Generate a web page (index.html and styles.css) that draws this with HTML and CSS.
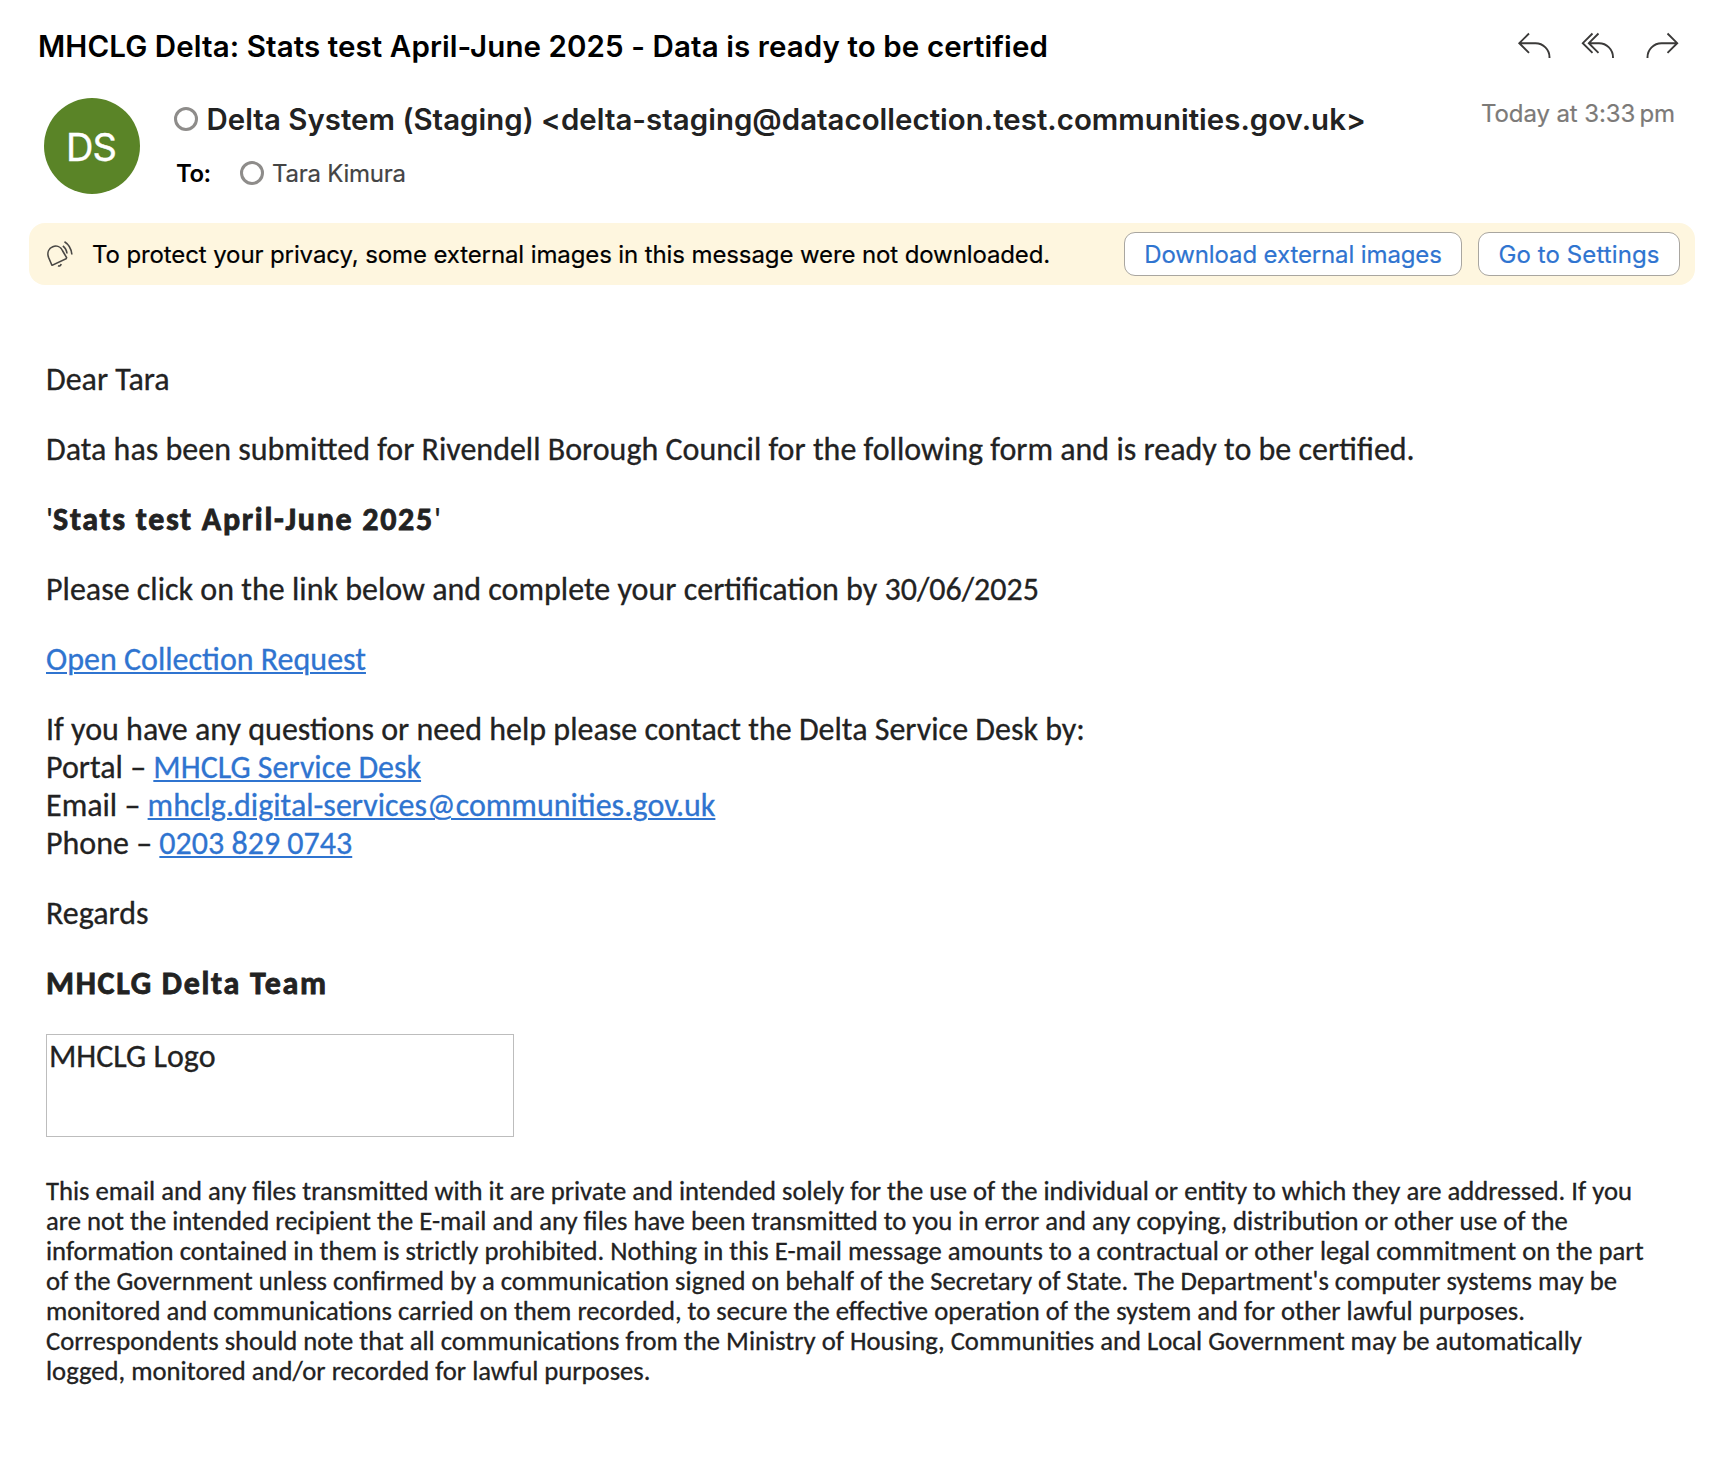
FILE: index.html
```html
<!DOCTYPE html>
<html lang="en">
<head>
<meta charset="utf-8">
<title>MHCLG Delta: Stats test April-June 2025 - Data is ready to be certified</title>
<link rel="stylesheet" href="styles.css">
</head>
<body>
<header class="subject-bar">
  <h1 class="subject">MHCLG Delta: Stats test April-June 2025 - Data is ready to be certified</h1>
  <nav class="actions">
    <svg class="action" viewBox="0 0 34 28" aria-label="Reply"><path d="M12 1.500 2.300 11.200 12 20.900M2.300 11.200H18.500A14 14 0 0 1 32.500 25.200V26"/></svg>
    <svg class="action" viewBox="0 0 34 28" aria-label="Reply all"><path d="M11.500 1.500 1.800 11.200 11.500 20.900M17.500 1.500 7.800 11.200 17.500 20.900M7.800 11.200H18A14 14 0 0 1 32 25.200V26"/></svg>
    <svg class="action" viewBox="0 0 34 28" aria-label="Forward"><path d="M22.500 1.500 32.200 11.200 22.500 20.900M32.200 11.200H16.500A14 14 0 0 0 2.500 25.200V26"/></svg>
  </nav>
</header>
<section class="envelope">
  <div class="avatar">DS</div>
  <div class="people">
    <div class="sender"><span class="presence"></span><span class="sender-name">Delta System (Staging) &lt;delta-staging@datacollection.test.communities.gov.uk&gt;</span></div>
    <div class="recipients"><span class="to">To:</span><span class="presence"></span><span class="recipient">Tara Kimura</span></div>
  </div>
  <time class="date">Today at 3:33&#8201;pm</time>
</section>
<aside class="banner">
  <svg class="bell" viewBox="0 0 28 28"><path d="M5.800 25 2.500 17.200C.9 12.400 2.800 8.300 6.800 6.700 10.800 5.200 14.800 7 16.700 11L20.600 17.600 20.200 18.700 6.400 25.200ZM12 25.800C13.500 26.400 14.800 25.600 15.200 24M16.800 6C19 7.500 20.500 10 21 13.500M18.500 1.800C22.600 4.300 25.300 9 25.900 14.500"/></svg>
  <p class="banner-text">To protect your privacy, some external images in this message were not downloaded.</p>
  <button class="button button-download">Download external images</button>
  <button class="button button-settings">Go to Settings</button>
</aside>
<main class="message">
  <p>Dear Tara</p>
  <p>Data has been submitted for Rivendell Borough Council for the following form and is ready to be certified.</p>
  <p>'<b>Stats test April-June 2025</b>'</p>
  <p>Please click on the link below and complete your certification by 30/06/2025</p>
  <p><a href="#">Open Collection Request</a></p>
  <p>If you have any questions or need help please contact the Delta Service Desk by:<br>
  Portal – <a href="#">MHCLG Service Desk</a><br>
  Email – <a href="#">mhclg.digital-services@communities.gov.uk</a><br>
  Phone – <a href="#">0203 829 0743</a></p>
  <p>Regards</p>
  <p><b>MHCLG Delta Team</b></p>
  <div class="logo">MHCLG Logo</div>
  <p class="disclaimer">This email and any files transmitted with it are private and intended solely for the use of the individual or entity to which they are addressed. If you are not the intended recipient the E-mail and any files have been transmitted to you in error and any copying, distribution or other use of the information contained in them is strictly prohibited. Nothing in this E-mail message amounts to a contractual or other legal commitment on the part of the Government unless confirmed by a communication signed on behalf of the Secretary of State. The Department's computer systems may be monitored and communications carried on them recorded, to secure the effective operation of the system and for other lawful purposes. Correspondents should note that all communications from the Ministry of Housing, Communities and Local Government may be automatically logged, monitored and/or recorded for lawful purposes.</p>
</main>
</body>
</html>
```
FILE: styles.css
```css
* { box-sizing: border-box; }

body {
  margin: 0;
  background: #fff;
  color: #222;
  font-family: Inter, "Liberation Sans", sans-serif;
}

p, h1 { margin: 0; }

.subject-bar {
  display: flex;
  justify-content: space-between;
  height: 98px;
  padding: 28px 37px 0 38px;
}

.subject {
  color: #000;
  font-size: 29.5px;
  font-weight: 600;
  line-height: 36px;
  letter-spacing: 0.09px;
}

.actions {
  display: flex;
  gap: 30px;
  padding-top: 3.5px;
}

.action {
  width: 34px;
  height: 28px;
  fill: none;
  stroke: #3b3a39;
  stroke-width: 1.9;
}

.envelope {
  display: flex;
  height: 125px;
  padding: 0 41px 0 44px;
}

.avatar {
  width: 96px;
  height: 96px;
  border-radius: 50%;
  background: #5a8427;
  color: #fff;
  font-size: 38px;
  line-height: 98px;
  letter-spacing: -1px;
  text-align: center;
  text-indent: -2px;
  -webkit-text-stroke: 0.4px;
}

.people { margin-left: 34px; }

.sender, .recipients {
  display: flex;
  align-items: center;
}

.sender {
  height: 42px;
  font-size: 29.4px;
  font-weight: 600;
  letter-spacing: 0.04px;
}

.recipients {
  height: 30px;
  margin-top: 18px;
  font-size: 24px;
  letter-spacing: -0.25px;
}

.presence {
  flex: none;
  width: 24px;
  height: 24px;
  border: 3px solid #8e8c8a;
  border-radius: 50%;
}

.sender-name { margin-left: 8.5px; white-space: nowrap; }
.to { width: 62px; padding-left: 2px; margin-right: 4px; color: #000; font-weight: 600; letter-spacing: -0.5px; }
.recipient { margin-left: 8px; color: #444; -webkit-text-stroke: 0.2px; }

.date {
  margin-left: auto;
  color: #7c7a78;
  font-size: 24px;
  line-height: 31px;
  letter-spacing: -0.1px;
  -webkit-text-stroke: 0.2px;
}

.banner {
  display: flex;
  align-items: center;
  height: 62px;
  margin: 0 21px 0 29px;
  padding: 0 15px 0 17px;
  border-radius: 16px;
  background: #fef6df;
  color: #000;
  font-size: 24px;
}

.bell {
  width: 28px;
  height: 28px;
  fill: none;
  stroke: #4a4845;
  stroke-width: 1.6;
}

.banner-text {
  flex: 1;
  margin-left: 18px;
  letter-spacing: -0.11px;
  white-space: nowrap;
  -webkit-text-stroke: 0.2px;
}

.button {
  height: 44px;
  padding: 0;
  border: 1px solid #a9a6a0;
  border-radius: 11px;
  background: #fff;
  color: #2f74d0;
  font: 24px Inter, "Liberation Sans", sans-serif;
  letter-spacing: -0.12px;
  -webkit-text-stroke: 0.2px;
}

.button-download { width: 338px; }
.button-settings { width: 202px; margin-left: 16px; letter-spacing: 0.1px; }

.message {
  padding: 76px 46px 0;
  font-family: Carlito, Calibri, Lato, sans-serif;
  font-size: 32px;
  line-height: 38px;
  -webkit-text-stroke: 0.3px;
}

.message p { margin-bottom: 32px; }

.message b {
  letter-spacing: 1.7px;
  -webkit-text-stroke: 0.8px;
}

.message a {
  color: #2f74d0;
  text-decoration-thickness: 2px;
  text-underline-offset: 2px;
}

.logo {
  width: 468px;
  height: 103px;
  margin-top: -1px;
  padding: 3px 2px;
  border: 1px solid #bdbdbd;
}

.message .disclaimer {
  width: 1610px;
  margin: 39px 0 0;
  font-size: 26.67px;
  line-height: 30px;
}
```
